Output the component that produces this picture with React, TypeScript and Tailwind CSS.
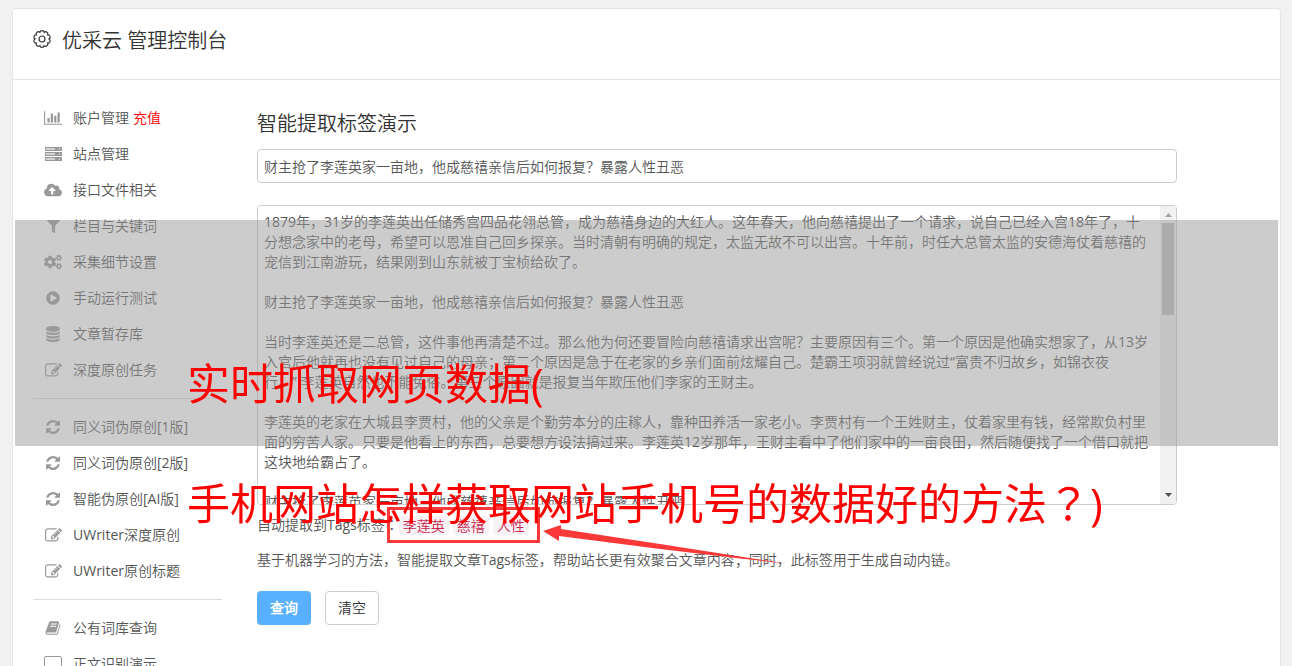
import { useState } from "react";
import type { ReactNode } from "react";
import { FaCloudUploadAlt, FaCogs, FaFilter, FaPlayCircle } from "react-icons/fa";

const paths = {
  chart:
    "M640 896v512h-256v-512h256zm384-512v1024h-256v-1024h256zm1024 1152v128h-2048v-1536h128v1408h1920zm-640-896v768h-256v-768h256zm384-384v1152h-256v-1152h256z",
  edit: "M888 1184l116-116-152-152-116 116v56h96v96h56zm440-720q-16-16-33 1l-350 350q-17 17-1 33t33-1l350-350q17-17 1-33zm80 594v190q0 119-84.5 203.5t-203.5 84.5h-832q-119 0-203.5-84.5t-84.5-203.5v-832q0-119 84.5-203.5t203.5-84.5h832q63 0 117 25 15 7 18 23 3 17-9 29l-49 49q-14 14-32 8-23-6-45-6h-832q-66 0-113 47t-47 113v832q0 66 47 113t113 47h832q66 0 113-47t47-113v-126q0-13 9-22l64-64q15-15 35-7t20 29zm-96-738l288 288-672 672h-288v-288zm444 132l-92 92-288-288 92-92q28-28 68-28t68 28l152 152q28 28 28 68t-28 68z",
  refresh:
    "M1511 928q0 5-1 7-64 268-268 434.5t-478 166.5q-146 0-282.5-55t-243.5-157l-129 129q-19 19-45 19t-45-19-19-45v-448q0-26 19-45t45-19h448q26 0 45 19t19 45-19 45l-137 137q71 66 161 102t187 36q134 0 250-65t186-179q11-17 53-117 8-23 30-23h192q13 0 22.5 9.5t9.5 22.5zm25-800v448q0 26-19 45t-45 19h-448q-26 0-45-19t-19-45 19-45l138-138q-148-137-349-137-134 0-250 65t-186 179q-11 17-53 117-8 23-30 23h-199q-13 0-22.5-9.5t-9.5-22.5v-7q65-268 270-434.5t480-166.5q146 0 284 55.5t245 156.5l130-129q19-19 45-19t45 19 19 45z",
  database:
    "M832 768q237 0 443-43t325-127v170q0 69-103 128t-280 93.5-385 34.5-385-34.5-280-93.5-103-128v-170q119 84 325 127t443 43zm0 768q237 0 443-43t325-127v170q0 69-103 128t-280 93.5-385 34.5-385-34.5-280-93.5-103-128v-170q119 84 325 127t443 43zm0-384q237 0 443-43t325-127v170q0 69-103 128t-280 93.5-385 34.5-385-34.5-280-93.5-103-128v-170q119 84 325 127t443 43zm0-1152q208 0 385 34.5t280 93.5 103 128v128q0 69-103 128t-280 93.5-385 34.5-385-34.5-280-93.5-103-128v-128q0-69 103-128t280-93.5 385-34.5z",
  book: "M1703 478q40 57 18 129l-275 906q-19 64-76.5 107.5t-122.5 43.5h-923q-77 0-148.5-53.5t-99.5-131.5q-24-67-2-127 0-4 3-27t4-37q1-8-3-21.5t-3-19.5q2-11 8-21t16.5-23.5 16.5-23.5q23-38 45-91.5t30-91.5q3-10 .5-30t-.5-28q3-11 17-28t17-23q21-36 42-92t25-90q1-9-2.5-32t.5-28q4-13 22-30.5t22-22.5q19-26 42.5-84.5t27.5-96.5q1-8-3-25.5t-2-26.5q2-8 9-18t18-23 17-21q8-12 16.5-30.5t15-35 16-36 19.5-32 26.5-23.5 36-11.5 47.5 5.5l-1 3q38-9 51-9h761q74 0 114 56t18 130l-274 906q-36 119-71.5 153.5t-128.5 34.5h-869q-27 0-38 15-11 16-1 43 24 70 144 70h923q29 0 56-15.5t35-41.5l300-987q7-22 5-57 38 15 59 43zm-1064 2q-4 13 2 22.5t20 9.5h608q13 0 25.5-9.5t16.5-22.5l21-64q4-13-2-22.5t-20-9.5h-608q-13 0-25.5 9.5t-16.5 22.5zm-83 256q-4 13 2 22.5t20 9.5h608q13 0 25.5-9.5t16.5-22.5l21-64q4-13-2-22.5t-20-9.5h-608q-13 0-25.5 9.5t-16.5 22.5z"
};

const chart = (
  <svg viewBox="0 0 2048 1792" className="h-4 w-[18px]" fill="currentColor">
    <path d={paths.chart} />
  </svg>
);
const server = (
  <svg viewBox="0 0 17 14" className="h-[14px] w-[17px]" fill="currentColor">
    <path fill="#d2d2d2" d="M1 1h15v2H1zM1 6h15v2H1zM1 11h15v2H1z" />
    <path
      fillRule="evenodd"
      d="M0 0h17v4H0zM1 1v2h9V1zm13 0v2h1V1zM0 5h17v4H0zM1 6v2h9V6zm13 0v2h1V6zM0 10h17v4H0zM1 11v2h9v-2zm13 0v2h1v-2z"
    />
  </svg>
);
const database = (
  <svg viewBox="64 0 1536 1792" className="h-4 w-[14px]" fill="currentColor">
    <path d={paths.database} />
  </svg>
);
const edit = (
  <svg viewBox="0 0 1792 1792" className="size-[17px]" fill="currentColor">
    <path d={paths.edit} />
  </svg>
);
const refresh = (
  <svg viewBox="0 0 1536 1536" className="size-[14px]" fill="currentColor">
    <path d={paths.refresh} />
  </svg>
);
const book = (
  <svg viewBox="0 0 1792 1792" className="size-4" fill="currentColor">
    <path d={paths.book} />
  </svg>
);
const desktop = (
  <svg viewBox="0 0 18 16" className="h-4 w-[18px]" fill="none" stroke="currentColor">
    <rect x="0.5" y="0.5" width="17" height="12" rx="1.5" />
    <path d="M6 15h6M9 13v2" />
  </svg>
);

type Item = { label: string; icon: ReactNode; badge?: string };

const groups: Item[][] = [
  [
    { label: "账户管理", icon: chart, badge: "充值" },
    { label: "站点管理", icon: server },
    { label: "接口文件相关", icon: <FaCloudUploadAlt className="h-4 w-[18px]" /> },
    { label: "栏目与关键词", icon: <FaFilter className="size-[13px]" /> },
    { label: "采集细节设置", icon: <FaCogs className="size-[18px]" /> },
    { label: "手动运行测试", icon: <FaPlayCircle className="size-[14px]" /> },
    { label: "文章暂存库", icon: database },
    { label: "深度原创任务", icon: edit }
  ],
  [
    { label: "同义词伪原创[1版]", icon: refresh },
    { label: "同义词伪原创[2版]", icon: refresh },
    { label: "智能伪原创[AI版]", icon: refresh },
    { label: "UWriter深度原创", icon: edit },
    { label: "UWriter原创标题", icon: edit }
  ],
  [
    { label: "公有词库查询", icon: book },
    { label: "正文识别演示", icon: desktop }
  ]
];

const initialTitle = "财主抢了李莲英家一亩地，他成慈禧亲信后如何报复？暴露人性丑恶";

const initialContent = `1879年，31岁的李莲英出任储秀宫四品花翎总管，成为慈禧身边的大红人。这年春天，他向慈禧提出了一个请求，说自己已经入宫18年了，十分想念家中的老母，希望可以恩准自己回乡探亲。当时清朝有明确的规定，太监无故不可以出宫。十年前，时任大总管太监的安德海仗着慈禧的宠信到江南游玩，结果刚到山东就被丁宝桢给砍了。

财主抢了李莲英家一亩地，他成慈禧亲信后如何报复？暴露人性丑恶

当时李莲英还是二总管，这件事他再清楚不过。那么他为何还要冒险向慈禧请求出宫呢？主要原因有三个。第一个原因是他确实想家了，从13岁入宫后他就再也没有见过自己的母亲；第二个原因是急于在老家的乡亲们面前炫耀自己。楚霸王项羽就曾经说过“富贵不归故乡，如锦衣夜
行。” 李莲英自然也不能免俗。第三个原因就是报复当年欺压他们李家的王财主。

李莲英的老家在大城县李贾村，他的父亲是个勤劳本分的庄稼人，靠种田养活一家老小。李贾村有一个王姓财主，仗着家里有钱，经常欺负村里面的穷苦人家。只要是他看上的东西，总要想方设法搞过来。李莲英12岁那年，王财主看中了他们家中的一亩良田，然后随便找了一个借口就把这块地给霸占了。

财主抢了李莲英家一亩地，他成慈禧亲信后如何报复？暴露人性丑恶`;

const tags = ["李莲英", "慈禧", "人性"];

export default function App() {
  return (
    <div
      lang="zh-CN"
      className="relative h-screen overflow-hidden bg-[#f1f1f1] pt-2 pr-[11px] pl-3 font-['Open_Sans','Noto_Sans_CJK_SC_DemiLight','Noto_Sans_CJK_SC',sans-serif] text-sm text-[#555]"
    >
      <div className="min-h-full rounded-t-[4px] border border-b-0 border-[#e5e5e5] bg-white">
        <header className="flex h-[71px] items-start gap-[11px] border-b border-[#e5e5e5] px-5 pt-[17px] text-[#333]">
          <GearIcon />
          <h1 className="text-xl leading-[30px] font-[350]">优采云 管理控制台</h1>
        </header>
        <div className="flex pt-5 pl-5">
          <Sidebar />
          <TagDemo />
        </div>
      </div>
      <Banner />
    </div>
  );
}

// Ten rounded teeth around a hub
const gearPoints = Array.from({ length: 10 }, (_, i) => {
  const angle = ((i + 0.5) / 10) * Math.PI * 2;
  return `${(9 + 7 * Math.sin(angle)).toFixed(2)} ${(9 - 7 * Math.cos(angle)).toFixed(2)}`;
});
const gearPath = `M${gearPoints[9]}${gearPoints.map((point) => `A2.2 2.2 0 0 1 ${point}`).join("")}Z`;

function GearIcon() {
  return (
    <svg
      viewBox="0 0 18 18"
      className="mt-1 size-[18px] overflow-visible"
      fill="none"
      stroke="currentColor"
      strokeWidth="1.2"
    >
      <circle cx="9" cy="9" r="3" />
      <path d={gearPath} />
    </svg>
  );
}

function Sidebar() {
  return (
    <nav className="w-[189px] shrink-0">
      {groups.map((items, index) => (
        <ul key={index} className={index > 0 ? "mt-[10px] border-t border-[#ddd] pt-[10px]" : ""}>
          {items.map((item) => (
            <li key={item.label}>
              <a href="#" className="flex h-9 items-center gap-[10px] pl-[10px]">
                <span className="flex w-5 shrink-0 justify-center text-[#999]">{item.icon}</span>
                <span>
                  {item.label}
                  {item.badge && <span className="ml-1 text-[#f00]">{item.badge}</span>}
                </span>
              </a>
            </li>
          ))}
        </ul>
      ))}
    </nav>
  );
}

function TagDemo() {
  const [title, setTitle] = useState(initialTitle);
  const [content, setContent] = useState(initialContent);

  function onClear() {
    setTitle("");
    setContent("");
  }

  return (
    <main className="min-w-0 flex-1 pt-2 pr-[103px] pl-[35px]">
      <h2 className="pt-px text-xl leading-[30px] font-[350] text-[#333]">智能提取标签演示</h2>
      <input
        type="text"
        aria-label="标题"
        value={title}
        onChange={(event) => setTitle(event.target.value)}
        className="mt-[10px] block h-[34px] w-full rounded-[4px] border border-[#ccc] bg-white px-[6px] outline-none"
      />
      <div className="relative mt-[22px]">
        <textarea
          aria-label="正文"
          value={content}
          onChange={(event) => setContent(event.target.value)}
          className="block h-[300px] w-full resize-none rounded-[4px] border border-[#ccc] bg-white py-[6px] pr-[24px] pl-[6px] leading-5 outline-none [scrollbar-width:none] [text-spacing-trim:space-all]"
        />
        <ScrollBar />
      </div>
      <div className="mt-2 flex h-6 items-center">
        <span>
          自动提取到Tags标签
          <span lang="ja" className="font-['Noto_Sans_CJK_JP',sans-serif] leading-none">：</span>
        </span>
        <div className="flex gap-1">
          {tags.map((tag) => (
            <code
              key={tag}
              className="rounded-[4px] bg-[#f9f2f4] px-1 font-['Noto_Sans_CJK_SC',sans-serif] text-sm leading-[19px] font-[350] text-[#c7254e]"
            >
              {tag}
            </code>
          ))}
        </div>
      </div>
      <p className="mt-[11px] leading-6">
        基于机器学习的方法，智能提取文章Tags标签，帮助站长更有效聚合文章内容；同时，此标签用于生成自动内链。
      </p>
      <div className="mt-[19px] flex gap-[14px]">
        <button type="button" className="h-[34px] w-[54px] rounded-[4px] bg-[#59b0ff] font-bold text-white">
          查询
        </button>
        <button
          type="button"
          onClick={onClear}
          className="h-[34px] w-[54px] rounded-[4px] border border-[#ccc] bg-white text-[#333]"
        >
          清空
        </button>
      </div>
    </main>
  );
}

function ScrollBar() {
  return (
    <div className="absolute inset-y-px right-px flex w-4 flex-col items-center justify-between rounded-r-[3px] bg-[#f1f1f1]">
      <div className="flex w-full flex-col items-center">
        <svg viewBox="0 0 7 4" className="mt-[7px] mb-[6px] h-1 w-[7px]" fill="#a3a3a3">
          <path d="M0 4L3.5 0L7 4z" />
        </svg>
        <div className="h-[92px] w-3 bg-[#c1c1c1]" />
      </div>
      <svg viewBox="0 0 7 4" className="my-[7px] h-1 w-[7px]" fill="#505050">
        <path d="M0 0h7L3.5 4z" />
      </svg>
    </div>
  );
}

// Headline band and pointer drawn over the console
function Banner() {
  return (
    <div className="pointer-events-none absolute inset-0">
      <div className="absolute top-[507px] left-[387px] h-9 w-[153px] border-3 border-[#fb3939]" />
      <svg
        viewBox="0 0 246 40"
        className="absolute top-[524px] left-[543px] h-10 w-[246px]"
        fill="#fb3939"
      >
        <path d="M0 7L18 1V5L117 20L197 32.5L243 39.5L197 34.5L117 25L16 12V17z" />
      </svg>
      <div className="absolute top-[220px] right-[14px] left-[15px] h-[226px] bg-[#999]/50" />
      <p className="absolute top-[324px] left-[187px] font-['Open_Sans','Noto_Sans_CJK_SC',sans-serif] text-[43px] leading-[120px] whitespace-nowrap text-[#f00]">
        实时抓取网页数据(
        <br />
        手机网站怎样获取网站手机号的数据好的方法
        <span lang="ja" className="font-['Noto_Sans_CJK_JP',sans-serif] leading-none">？</span>)
      </p>
    </div>
  );
}
